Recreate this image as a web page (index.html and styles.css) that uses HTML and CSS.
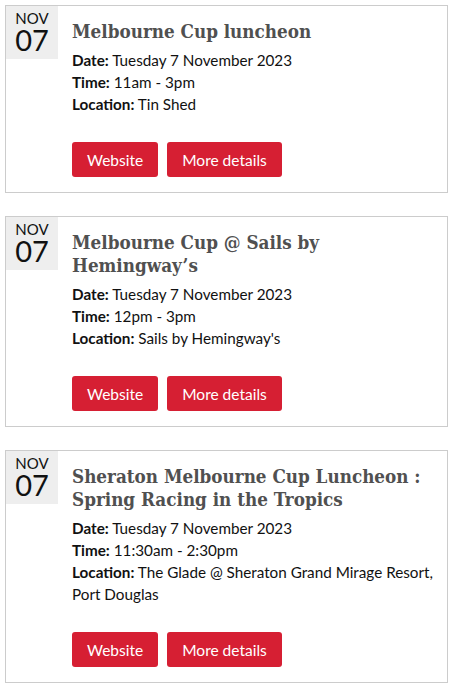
FILE: index.html
```html
<!DOCTYPE html>
<html>
<head>
<meta charset="utf-8">
<link rel="stylesheet" href="styles.css">
</head>
<body>
<div class="list">
  <div class="event">
    <div class="date"><span class="mon">NOV</span><span class="day">07</span></div>
    <div class="body">
      <h3 class="title">Melbourne Cup luncheon</h3>
      <div class="meta">
        <div><b>Date:</b> Tuesday 7 November 2023</div>
        <div><b>Time:</b> 11am - 3pm</div>
        <div><b>Location:</b> Tin Shed</div>
      </div>
      <div class="actions"><a class="btn">Website</a><a class="btn">More details</a></div>
    </div>
  </div>
  <div class="event">
    <div class="date"><span class="mon">NOV</span><span class="day">07</span></div>
    <div class="body">
      <h3 class="title">Melbourne Cup @ Sails by Hemingway’s</h3>
      <div class="meta">
        <div><b>Date:</b> Tuesday 7 November 2023</div>
        <div><b>Time:</b> 12pm - 3pm</div>
        <div><b>Location:</b> Sails by Hemingway's</div>
      </div>
      <div class="actions"><a class="btn">Website</a><a class="btn">More details</a></div>
    </div>
  </div>
  <div class="event">
    <div class="date"><span class="mon">NOV</span><span class="day">07</span></div>
    <div class="body">
      <h3 class="title">Sheraton Melbourne Cup Luncheon : Spring Racing in the Tropics</h3>
      <div class="meta">
        <div><b>Date:</b> Tuesday 7 November 2023</div>
        <div><b>Time:</b> 11:30am - 2:30pm</div>
        <div><b>Location:</b> The Glade @ Sheraton Grand Mirage Resort, Port Douglas</div>
      </div>
      <div class="actions"><a class="btn">Website</a><a class="btn">More details</a></div>
    </div>
  </div>
</div>
</body>
</html>
```
FILE: styles.css
```css
* { box-sizing: border-box; }
body {
  margin: 0;
  padding: 5px 2px 0 5px;
  font-family: Lato, "Open Sans", sans-serif;
  color: #111;
  background: #fff;
}
.list {
  display: flex;
  flex-direction: column;
  gap: 23px;
}
.event {
  display: flex;
  border: 1px solid #ccc;
  padding-bottom: 15px;
}
.date {
  width: 52px;
  height: 53px;
  flex: none;
  background: #eee;
  display: flex;
  flex-direction: column;
  align-items: center;
  padding-top: 5px;
  color: #111;
}
.mon {
  font-size: 15px;
  line-height: 15px;
}
.day {
  font-size: 29px;
  line-height: 27px;
}
.body {
  flex: 1;
  padding: 14px 10px 0 14px;
}
.title {
  margin: 0;
  font-family: "DejaVu Serif", serif;
  font-stretch: condensed;
  font-weight: bold;
  font-size: 18.7px;
  line-height: 23px;
  color: #505050;
}
.meta {
  margin-top: 6px;
  font-size: 15.25px;
  line-height: 22px;
}
.meta b { font-weight: bold; }
.actions {
  display: flex;
  gap: 9px;
  margin-top: 27px;
}
.btn {
  display: inline-flex;
  align-items: center;
  height: 35px;
  padding: 0 15px;
  background: #d61f33;
  color: #fff;
  border-radius: 3px;
  font-size: 15.5px;
}
```
